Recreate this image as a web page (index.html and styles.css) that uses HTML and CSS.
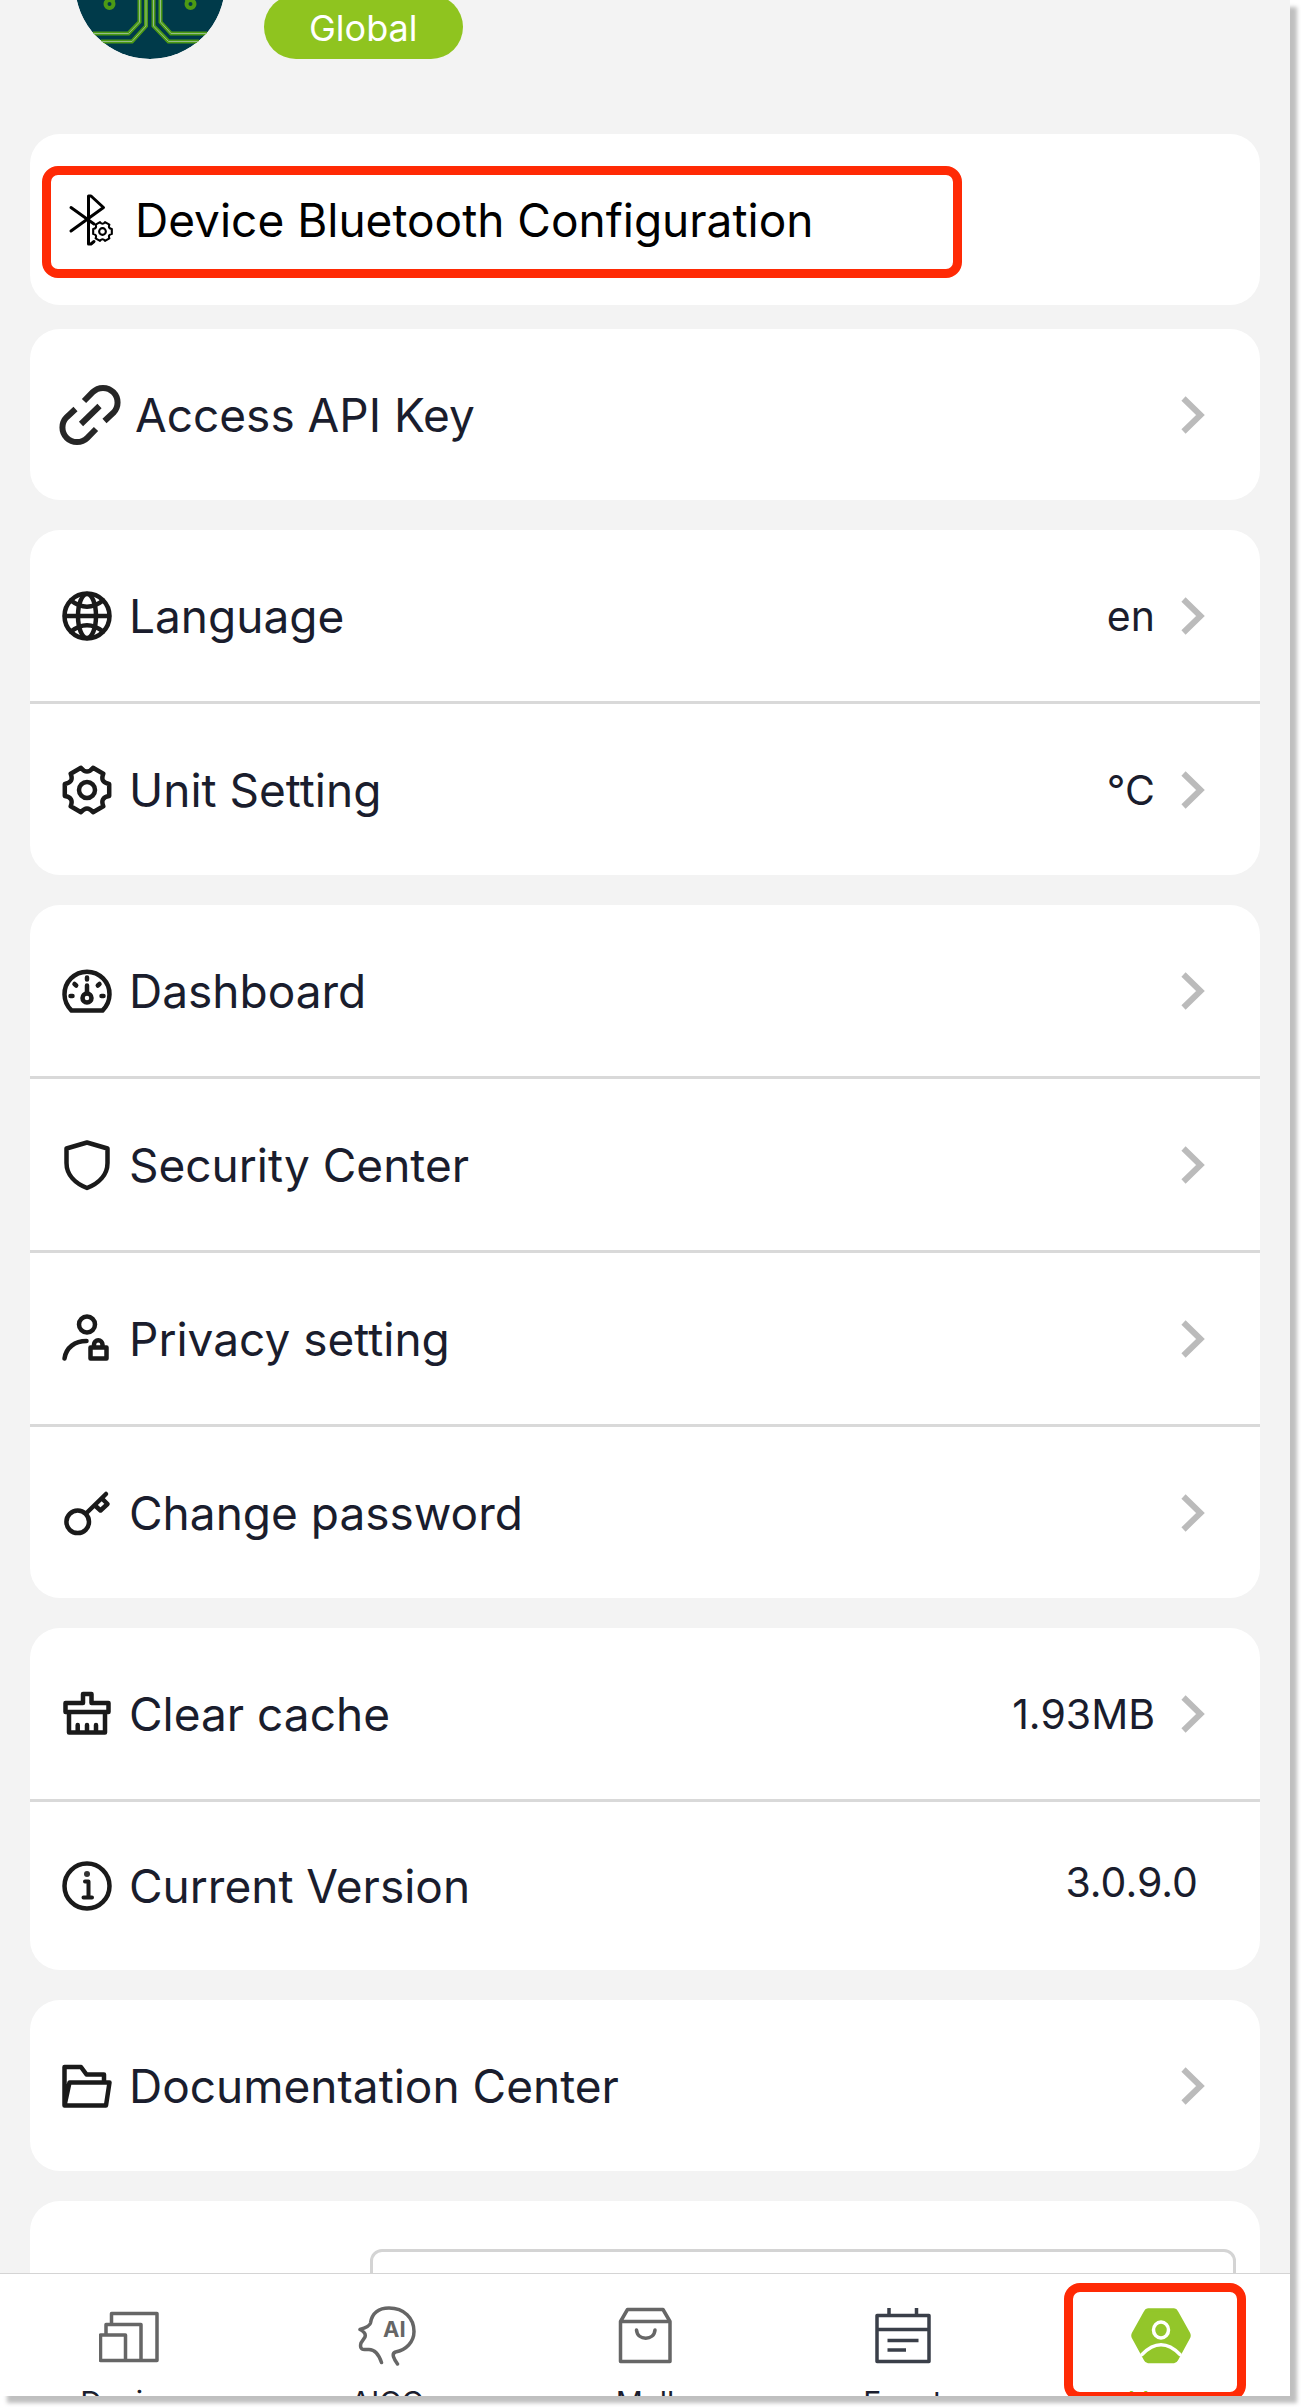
FILE: index.html
```
<!DOCTYPE html>
<html lang="en">
<head>
<meta charset="utf-8">
<meta name="viewport" content="width=device-width, initial-scale=1">
<title>User</title>
<link rel="stylesheet" href="styles.css">
</head>
<body>
<svg class="defs" aria-hidden="true">
  <symbol id="gear" viewBox="0 0 50 50">
    <path d="M47.2 31Q37.8 32.4 41.3 41.3L31 47.2Q25 39.8 19 47.2L8.7 41.3Q12.2 32.4 2.8 31V19Q12.2 17.6 8.7 8.7L19 2.8Q25 10.2 31 2.8L41.3 8.7Q37.8 17.6 47.2 19Z"/>
    <circle cx="25" cy="25" r="8"/>
  </symbol>
  <symbol id="chevron" viewBox="0 0 24 38">
    <path d="M2.500 2.500 19.500 19 2.500 35.500"/>
  </symbol>
</svg>
<div class="screen">
  <main class="content">
    <header class="profile">
      <svg class="avatar" viewBox="0 0 150 150" aria-hidden="true">
        <circle class="avatar-bg" cx="75" cy="75" r="75"/>
        <g class="trace">
          <path d="M64.500 80V113L53.500 124.500H18M71 80V117L57 132.500H26M85.500 80V113L96 124.500H132M78.500 80V117L93.500 132.500H124M37 92 48 78M113 92 102 78"/>
          <circle cx="34.500" cy="95" r="4"/><circle cx="115.500" cy="95" r="4"/>
        </g>
        <path class="trace-core" d="M64.500 80V113L53.500 124.500H18M71 80V117L57 132.500H26M85.500 80V113L96 124.500H132M78.500 80V117L93.500 132.500H124"/>
      </svg>
      <span class="region">Global</span>
    </header>

    <section class="card card-bluetooth">
      <a class="row row-bluetooth" href="#">
        <svg class="icon icon-bluetooth" viewBox="0 0 43 50" aria-hidden="true">
          <path d="M24 46.500 21 49H18.500V1H21L33.500 12.500 1 36M1 12.500 24 29"/>
          <use href="#gear" x="22" y="26" width="21" height="21" class="small-gear"/>
        </svg>
        <span class="label">Device Bluetooth Configuration</span>
      </a>
      <div class="mark mark-row"></div>
    </section>

    <section class="card">
      <a class="row row-api" href="#">
        <svg class="icon icon-link" viewBox="0 0 60 60" aria-hidden="true">
          <path d="M24 16 32.700 7.200A14.500 14.500 0 0 1 53.300 27.800L44.500 36M36 44 27.300 52.800A14.500 14.500 0 0 1 6.700 32.200L15.500 24M21 39 39.500 21"/>
        </svg>
        <span class="label">Access API Key</span>
        <svg class="chevron" aria-hidden="true"><use href="#chevron"/></svg>
      </a>
    </section>

    <section class="card">
      <a class="row" href="#">
        <svg class="icon" viewBox="0 0 50 50" aria-hidden="true">
          <circle cx="25" cy="25" r="22.500"/><ellipse cx="25" cy="25" rx="9" ry="22"/>
          <path d="M3 25H47M9 9.500Q25 22 41 9.500M9 40.500Q25 28 41 40.500"/>
        </svg>
        <span class="label">Language</span>
        <span class="value">en</span>
        <svg class="chevron" aria-hidden="true"><use href="#chevron"/></svg>
      </a>
      <a class="row" href="#">
        <svg class="icon" aria-hidden="true"><use href="#gear"/></svg>
        <span class="label">Unit Setting</span>
        <span class="value">°C</span>
        <svg class="chevron" aria-hidden="true"><use href="#chevron"/></svg>
      </a>
    </section>

    <section class="card">
      <a class="row" href="#">
        <svg class="icon" viewBox="0 0 50 50" aria-hidden="true">
          <path d="M9.500 44.500A22.500 22.500 0 1 1 40.500 44.500Z"/><circle cx="25" cy="32" r="4.500"/>
          <path d="M25 19.500V27M25 11.500V13.500M8.500 30H10.500M39.500 30H41.500M12.500 18 14.200 19.500M37.500 18 35.800 19.500"/>
        </svg>
        <span class="label">Dashboard</span>
        <svg class="chevron" aria-hidden="true"><use href="#chevron"/></svg>
      </a>
      <a class="row" href="#">
        <svg class="icon" viewBox="0 0 50 50" aria-hidden="true">
          <path d="M25 2.500 45.500 8.500V23C45.500 35 36.500 43.500 25 48C13.500 43.500 4.500 35 4.500 23V8.500Z"/>
        </svg>
        <span class="label">Security Center</span>
        <svg class="chevron" aria-hidden="true"><use href="#chevron"/></svg>
      </a>
      <a class="row" href="#">
        <svg class="icon" viewBox="0 0 50 50" aria-hidden="true">
          <circle cx="25" cy="10.500" r="8"/>
          <path d="M2.500 44.500C4 33.500 13 27 24.500 27M28.500 33.500H44.500V44.500H28.500ZM32 32V30.500A4 4 0 0 1 40.500 30.500V32"/>
        </svg>
        <span class="label">Privacy setting</span>
        <svg class="chevron" aria-hidden="true"><use href="#chevron"/></svg>
      </a>
      <a class="row" href="#">
        <svg class="icon" viewBox="0 0 50 50" aria-hidden="true">
          <circle cx="15.700" cy="33.800" r="11.300"/>
          <path d="M24 25.500 44 6M33 17.500 38.500 22.500 45.500 16 40 10.500"/>
        </svg>
        <span class="label">Change password</span>
        <svg class="chevron" aria-hidden="true"><use href="#chevron"/></svg>
      </a>
    </section>

    <section class="card">
      <a class="row" href="#">
        <svg class="icon" viewBox="0 0 50 50" aria-hidden="true">
          <path d="M21 14V5H29.500V14H46.500V23H3.500V14ZM7 23V43.500H43V23M15.700 36V43M25 36V43M34 36V43"/>
        </svg>
        <span class="label">Clear cache</span>
        <span class="value">1.93MB</span>
        <svg class="chevron" aria-hidden="true"><use href="#chevron"/></svg>
      </a>
      <div class="row row-version">
        <svg class="icon" viewBox="0 0 50 50" aria-hidden="true">
          <circle cx="25" cy="25" r="22.500"/><circle class="dot" cx="25" cy="13" r="3"/>
          <path class="info-i" d="M23 20.500H26.500V36.500M21.500 36.500H30"/>
        </svg>
        <span class="label">Current Version</span>
        <span class="value">3.0.9.0</span>
      </div>
    </section>

    <section class="card">
      <a class="row" href="#">
        <svg class="icon" viewBox="0 0 50 50" aria-hidden="true">
          <path d="M2.500 44.500V6H19L24.500 13.500H42V21.500M2.500 44.500 7.500 21.500H47.500L44 44.500Z"/>
        </svg>
        <span class="label">Documentation Center</span>
        <svg class="chevron" aria-hidden="true"><use href="#chevron"/></svg>
      </a>
    </section>

    <section class="card card-field">
      <input class="field" type="text" aria-label="Account">
    </section>
  </main>

  <nav class="tabs">
    <a class="tab" href="#">
      <svg class="tab-icon" viewBox="0 0 60 60" aria-hidden="true"><path d="M12.500 18V7.500H58V54.500H1.500V29H26.500V54.500M7 29V18.500H42V54.500"/></svg>
      <span>Device</span>
    </a>
    <a class="tab" href="#">
      <svg class="tab-icon" viewBox="0 0 60 60" aria-hidden="true">
        <path d="M24.500 56.500C22 49 18 43.500 12 43.500H7.500C3.500 43.500 3 40.500 4 37L8 31C9 28 7 25.500 3 23.500C8 22 13 19.500 13.500 17C15 7 22 2 32 2C47 2 57 12 57 25.500C57 36 49 44 38.500 46C34 47.500 37 53 40.500 58"/>
        <text class="ai" x="26" y="31">AI</text>
      </svg>
      <span>AIGC</span>
    </a>
    <a class="tab" href="#">
      <svg class="tab-icon" viewBox="0 0 60 60" aria-hidden="true"><path d="M5.500 15.500 12.500 3.500H48L55 15.500V55.500H5.500ZM5.500 15.500H55M21.500 24C22.500 35 39 35 40 24"/></svg>
      <span>Mall</span>
    </a>
    <a class="tab" href="#">
      <svg class="tab-icon tab-icon-event" viewBox="0 0 60 60" aria-hidden="true"><path d="M4 9.500H56V55.500H4ZM4 23.500H56M16 2V9M43.500 2V9M14.500 34.500H45.500M14.500 44H33"/></svg>
      <span>Event</span>
    </a>
    <a class="tab tab-active" href="#" aria-current="page">
      <svg class="tab-icon" viewBox="0 0 60 60" aria-hidden="true">
        <path class="hex" d="M17 4H43Q44.500 4 45.500 6L57.500 27.500Q58.500 29.500 57.500 31.500L45.500 53.500Q44.500 55.500 43 55.500H17Q15.500 55.500 14.500 53.500L2.500 31.500Q1.500 29.500 2.500 27.500L14.500 6Q15.500 4 17 4Z"/>
        <path class="person" d="M11 48.500Q30 29 49 48.500"/><ellipse class="person" cx="30" cy="24" rx="7.500" ry="8"/>
      </svg>
      <span>User</span>
      <i class="mark mark-tab"></i>
    </a>
  </nav>
</div>
</body>
</html>
```
FILE: styles.css
```
* { box-sizing: border-box; }

body {
  margin: 0;
  padding: 0 11px 11px 0;
  height: 100vh;
  background: #fff;
  color: #1a1d2d;
  font-family: Inter, "Liberation Sans", sans-serif;
}

a { color: inherit; text-decoration: none; }

.defs { position: absolute; width: 0; height: 0; }

.screen {
  display: flex;
  flex-direction: column;
  height: 100%;
  overflow: hidden;
  background: #f3f3f3;
  box-shadow: 7px 7px 4px rgba(0, 0, 0, 0.25);
}

.content {
  flex: 1;
  min-height: 0;
  overflow: hidden;
  padding: 0 30px;
}

/* The list is scrolled: the top of the profile is out of view. */
.profile {
  display: flex;
  align-items: flex-end;
  gap: 39px;
  margin: -91px 0 75px;
  padding: 0 45px;
}

.avatar { width: 150px; height: 150px; border-radius: 50%; }
.avatar-bg { fill: #003a4a; }
.trace { fill: none; stroke: #4c9a14; stroke-width: 4; }
.trace-core { fill: none; stroke: #93bb8b; stroke-width: 1; }

.region {
  padding: 2px 45px 0;
  border-radius: 32px;
  background: #8fc41f;
  color: #fff;
  font-size: 36px;
  line-height: 62px;
}

.card {
  margin-bottom: 30px;
  border-radius: 30px;
  background: #fff;
}

.card-bluetooth { position: relative; margin-bottom: 24px; color: #000; }

.row {
  display: flex;
  align-items: center;
  gap: 17px;
  height: 171px;
  padding: 0 55px 0 32px;
}

.row + .row { height: 174px; border-top: 3px solid #d9d9d9; }
.row + .row-version { height: 171px; padding-right: 62px; }
.row-version .value { padding-bottom: 8px; }
.row-bluetooth { gap: 22px; padding-left: 40px; }
.row-api { gap: 15px; padding-left: 30px; }

.icon {
  flex: none;
  width: 50px;
  height: 50px;
  overflow: visible;
  fill: none;
  stroke: #1a1a1a;
  stroke-width: 4.5px;
  stroke-linecap: round;
  stroke-linejoin: round;
}

.icon-bluetooth { width: 43px; stroke: #000; stroke-width: 3px; }
.small-gear { stroke-width: 5px; }
.icon-link { width: 60px; height: 60px; stroke: #262626; stroke-width: 6px; stroke-linecap: butt; }
.dot { fill: #333; stroke: none; }
.info-i { stroke-width: 4px; }

.label { flex: 1; font-size: 46px; line-height: 60px; white-space: nowrap; }
.value { font-size: 41px; line-height: 50px; }

.chevron {
  flex: none;
  width: 24px;
  height: 38px;
  margin-left: 9px;
  fill: none;
  stroke: #bbb;
  stroke-width: 6px;
}

.card-field { padding: 48px 24px 48px 340px; }

.field {
  display: block;
  width: 100%;
  height: 111px;
  padding: 0 24px;
  border: 3px solid #d4d4d4;
  border-radius: 12px;
  background: #fff;
  font: inherit;
  font-size: 41px;
}

.tabs {
  flex: none;
  display: grid;
  grid-template-columns: repeat(5, 1fr);
  height: 123px;
  overflow: hidden;
  border-top: 1px solid #d4d4d4;
  background: #fff;
}

.tab {
  position: relative;
  display: flex;
  flex-direction: column;
  align-items: center;
  gap: 18px;
  padding-top: 32px;
  font-size: 30px;
  line-height: 36px;
}

.tab-active { color: #8fc41f; }

.tab-icon {
  flex: none;
  width: 60px;
  height: 60px;
  fill: none;
  stroke: #666;
  stroke-width: 3.5px;
  stroke-linejoin: round;
  stroke-linecap: round;
}

.tab-icon-event { stroke: #3a3f49; stroke-linecap: butt; }
.ai { fill: #666; stroke: none; font-family: "Liberation Sans Narrow", Inter, sans-serif; font-size: 22px; font-weight: 700; }
.hex { fill: #93c62a; stroke: #93c62a; }
.person { stroke: #fff; }

.mark {
  position: absolute;
  border: 9px solid #ff2a05;
  border-radius: 16px;
  pointer-events: none;
}

.mark-row { top: 32px; right: 298px; bottom: 27px; left: 12px; }
.mark-tab { top: 9px; left: 32px; right: 44px; height: 118px; }
```
